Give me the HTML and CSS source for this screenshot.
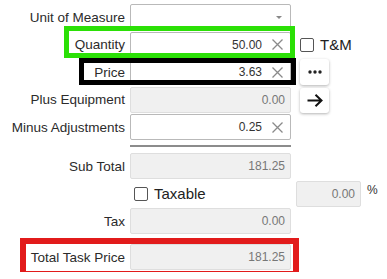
FILE: index.html
```html
<!DOCTYPE html>
<html lang="en">
<head>
<meta charset="UTF-8">
<meta name="viewport" content="width=device-width, initial-scale=1.0">
<title>Task Price</title>
<link rel="stylesheet" href="styles.css">
</head>
<body>
    <div class="form">
        <div class="row">
            <label class="lbl">Unit of Measure</label>
            <div class="field">
                <span class="caret"></span>
            </div>
        </div>

        <div class="row">
            <span class="mark mark-green"></span>
            <label class="lbl">Quantity</label>
            <div class="field">
                <span class="val">50.00</span>
                <svg class="clear" width="11" height="11" viewBox="0 0 11 11"><path d="M0.5 0.5L10.5 10.5M10.5 0.5L0.5 10.5"/></svg>
            </div>
            <label class="check extra"><span class="box"></span>T&amp;M</label>
        </div>

        <div class="row">
            <span class="mark mark-black"></span>
            <label class="lbl">Price</label>
            <div class="field">
                <span class="val">3.63</span>
                <svg class="clear" width="11" height="11" viewBox="0 0 11 11"><path d="M0.5 0.5L10.5 10.5M10.5 0.5L0.5 10.5"/></svg>
            </div>
            <button class="btn extra">
                <svg width="14" height="4" viewBox="0 0 14 4"><circle cx="2" cy="2" r="1.7"/><circle cx="7" cy="2" r="1.7"/><circle cx="12" cy="2" r="1.7"/></svg>
            </button>
        </div>

        <div class="row">
            <label class="lbl">Plus Equipment</label>
            <div class="field off">0.00</div>
            <button class="btn btn-short extra">
                <svg width="16" height="13" viewBox="0 0 16 13"><path d="M0.5 6.5H14.5M8.5 0.8L14.5 6.5L8.5 12.2" fill="none"/></svg>
            </button>
        </div>

        <div class="row">
            <label class="lbl">Minus Adjustments</label>
            <div class="field">
                <span class="val">0.25</span>
                <svg class="clear" width="11" height="11" viewBox="0 0 11 11"><path d="M0.5 0.5L10.5 10.5M10.5 0.5L0.5 10.5"/></svg>
            </div>
        </div>

        <div class="sep"></div>

        <div class="row">
            <label class="lbl">Sub Total</label>
            <div class="field off">181.25</div>
        </div>

        <div class="row">
            <span class="lbl"></span>
            <label class="check check-tax"><span class="box"></span>Taxable</label>
            <div class="field off pct">0.00</div>
            <span class="pct-sign">%</span>
        </div>

        <div class="row">
            <label class="lbl">Tax</label>
            <div class="field off">0.00</div>
        </div>

        <div class="row row-total">
            <span class="mark mark-red"></span>
            <label class="lbl">Total Task Price</label>
            <div class="field off">181.25</div>
        </div>
    </div>
</body>
</html>
```

FILE: styles.css
```css
body {
    font-family: "Liberation Sans", Arial, sans-serif;
    margin: 0;
    background: #fff;
    color: #333;
}

.form {
    display: flex;
    flex-direction: column;
    padding-top: 4px;
    width: 387px;
}

.row {
    position: relative;
    display: flex;
    align-items: center;
    height: 26px;
    margin-bottom: 1.5px;
}

.lbl {
    flex: none;
    width: 125px;
    margin-right: 5px;
    text-align: right;
    font-size: 13.5px;
    color: #2b2b2b;
    white-space: nowrap;
}

.field {
    flex: none;
    width: 161px;
    height: 26px;
    box-sizing: border-box;
    border: 1px solid #b9b9b9;
    border-radius: 2px;
    background: #fff;
    display: flex;
    align-items: center;
    justify-content: flex-end;
    padding: 0 7px 0 6px;
    font-size: 12px;
    color: #333;
}

.field.off {
    background: #f0f0f0;
    border-color: #dedede;
    color: #777;
    padding-right: 5px;
}

.caret {
    width: 0;
    height: 0;
    border-left: 3px solid transparent;
    border-right: 3px solid transparent;
    border-top: 3px solid #888;
    margin-right: 1px;
}

.clear {
    margin-left: 10px;
    stroke: #8a8a8a;
    stroke-width: 1.3;
}

.extra {
    margin-left: 9px;
}

.check {
    display: flex;
    align-items: center;
    font-size: 15px;
    color: #222;
}

.box {
    width: 14px;
    height: 14px;
    box-sizing: border-box;
    border: 1px solid #555;
    border-radius: 2px;
    background: #fff;
    margin-right: 6px;
}

.check-tax {
    width: 161px;
    padding-left: 4px;
    box-sizing: border-box;
}

.pct {
    width: 65px;
    margin-left: 5px;
    border-right-color: #9a9a9a;
    border-bottom-color: #cfcfcf;
}

.pct-sign {
    align-self: flex-start;
    margin: 2px 0 0 6px;
    font-size: 12px;
    color: #333;
}

.btn {
    width: 29px;
    height: 26px;
    padding: 0;
    border: 0;
    border-radius: 3px;
    background: #fff;
    box-shadow: 0 1px 3px rgba(0, 0, 0, 0.3);
    display: flex;
    align-items: center;
    justify-content: center;
    fill: #222;
}

.btn-short {
    height: 25px;
    margin-top: 1px;
}

.btn path {
    stroke: #111;
    stroke-width: 2;
}

.sep {
    flex: none;
    margin: 3.5px 0 6px 130px;
    width: 161px;
    height: 2px;
    background: #8c8c8c;
}

.row-total {
    margin-top: 8.5px;
}

.mark {
    position: absolute;
    box-sizing: border-box;
    z-index: 2;
    pointer-events: none;
}

.mark-green {
    left: 64px;
    top: -5.5px;
    width: 231px;
    height: 32px;
    border: 5px solid #2be006;
}

.mark-black {
    left: 79px;
    top: -1px;
    width: 217px;
    height: 27px;
    border: 5px solid #000;
}

.mark-red {
    left: 20px;
    top: -6px;
    width: 279px;
    height: 39px;
    border: 6px solid #e21b1b;
}
```
